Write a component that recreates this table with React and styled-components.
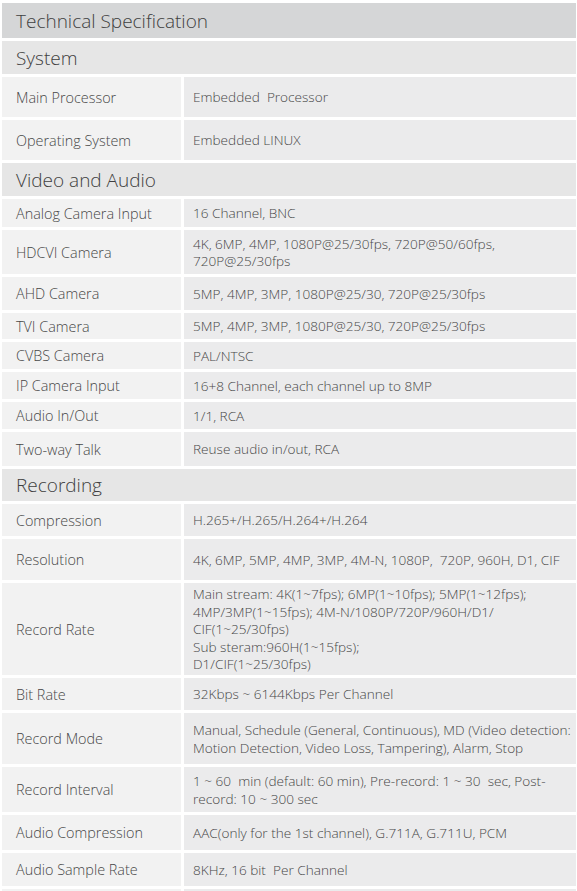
import React from 'react';
import styled, { createGlobalStyle } from 'styled-components';

const GlobalStyle = createGlobalStyle`
  body {
    margin: 0;
    background: #ffffff;
    font-family: "Open Sans", "DejaVu Sans", sans-serif;
  }
`;

const Sheet = styled.div`
  display: flex;
  flex-direction: column;
  gap: 3px;
  padding: 3px 1px 0 2px;
`;

const Band = styled.div`
  display: flex;
  align-items: center;
  height: ${({ h }) => h}px;
  padding-left: 14px;
  background: ${({ title }) => (title ? '#d5d6d7' : '#e6e6e6')};
  color: #404040;
  font-size: 19px;
  font-weight: 350;
`;

const Row = styled.div`
  display: grid;
  grid-template-columns: 179px 1fr;
  column-gap: 3px;
  height: ${({ h }) => h}px;
`;

const Label = styled.div`
  display: flex;
  align-items: center;
  padding-left: 14px;
  background: #f2f2f2;
  color: #474747;
  font-size: 14.4px;
  font-weight: 350;
`;

const Value = styled.div`
  display: flex;
  align-items: center;
  padding: 0 2px 0 9px;
  background: #ebebec;
  color: #474747;
  font-size: 13.6px;
  font-weight: 350;
  line-height: 17.5px;
  white-space: pre-wrap;
`;

const sections = [
  {
    name: 'System',
    h: 33,
    rows: [
      ['Main Processor', 'Embedded  Processor', 40],
      ['Operating System', 'Embedded LINUX', 40],
    ],
  },
  {
    name: 'Video and Audio',
    h: 33,
    rows: [
      ['Analog Camera Input', '16 Channel, BNC', 28],
      ['HDCVI Camera', ['4K, 6MP, 4MP, 1080P@25/30fps, 720P@50/60fps,', '720P@25/30fps'], 44],
      ['AHD Camera', '5MP, 4MP, 3MP, 1080P@25/30, 720P@25/30fps', 33],
      ['TVI Camera', '5MP, 4MP, 3MP, 1080P@25/30, 720P@25/30fps', 26],
      ['CVBS Camera', 'PAL/NTSC', 27],
      ['IP Camera Input', '16+8 Channel, each channel up to 8MP', 27],
      ['Audio In/Out', '1/1, RCA', 27],
      ['Two-way Talk', 'Reuse audio in/out, RCA', 34],
    ],
  },
  {
    name: 'Recording',
    h: 32,
    rows: [
      ['Compression', 'H.265+/H.265/H.264+/H.264', 32],
      ['Resolution', '4K, 6MP, 5MP, 4MP, 3MP, 4M-N, 1080P,  720P, 960H, D1, CIF', 41],
      [
        'Record Rate',
        [
          'Main stream: 4K(1~7fps); 6MP(1~10fps); 5MP(1~12fps);',
          '4MP/3MP(1~15fps); 4M-N/1080P/720P/960H/D1/',
          'CIF(1~25/30fps)',
          'Sub steram:960H(1~15fps);',
          'D1/CIF(1~25/30fps)',
        ],
        92,
      ],
      ['Bit Rate', '32Kbps ~ 6144Kbps Per Channel', 32],
      [
        'Record Mode',
        ['Manual, Schedule (General, Continuous), MD (Video detection:', 'Motion Detection, Video Loss, Tampering), Alarm, Stop'],
        51,
      ],
      [
        'Record Interval',
        ['1 ~ 60  min (default: 60 min), Pre-record: 1 ~ 30  sec, Post-', 'record: 10 ~ 300 sec'],
        45,
      ],
      ['Audio Compression', 'AAC(only for the 1st channel), G.711A, G.711U, PCM', 35],
      ['Audio Sample Rate', '8KHz, 16 bit  Per Channel', 33],
      ['', '', 30],
    ],
  },
];

const Lines = ({ value }) =>
  Array.isArray(value)
    ? value.map((line, i) => (
        <React.Fragment key={i}>
          {line}
          {i < value.length - 1 && <br />}
        </React.Fragment>
      ))
    : value;

export default function App() {
  return (
    <>
      <GlobalStyle />
      <Sheet>
        <Band title="1" h={35}>Technical Specification</Band>
        {sections.map((s) => (
          <React.Fragment key={s.name}>
            <Band h={s.h}>{s.name}</Band>
            {s.rows.map(([label, value, h], i) => (
              <Row key={i} h={h}>
                <Label>{label}</Label>
                <Value>
                  <span>
                    <Lines value={value} />
                  </span>
                </Value>
              </Row>
            ))}
          </React.Fragment>
        ))}
      </Sheet>
    </>
  );
}
